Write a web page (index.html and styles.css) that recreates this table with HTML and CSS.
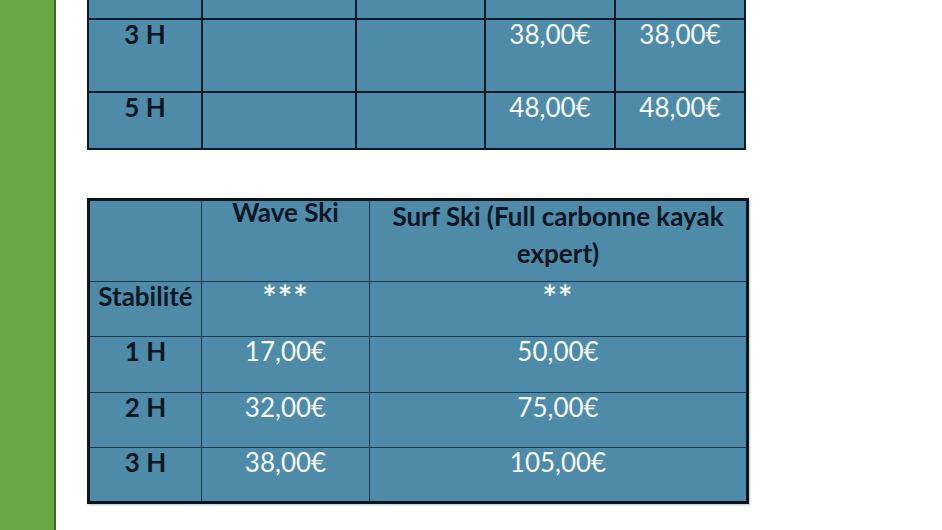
FILE: index.html
```html
<!DOCTYPE html>
<html lang="fr">
<head>
<meta charset="utf-8">
<title>Tarifs</title>
<link rel="stylesheet" href="styles.css">
</head>
<body>
<div class="page">
  <div class="sidebar"></div>
  <main class="content">
    <table class="tarifs tarifs-top">
      <colgroup>
        <col class="c114"><col class="c154"><col class="c129"><col class="c130"><col class="c130">
      </colgroup>
      <tr class="r-cut"><td></td><td></td><td></td><td></td><td></td></tr>
      <tr class="r-73"><th>3 H</th><td></td><td></td><td class="val">38,00€</td><td class="val">38,00€</td></tr>
      <tr class="r-57"><th>5 H</th><td></td><td></td><td class="val">48,00€</td><td class="val">48,00€</td></tr>
    </table>

    <table class="tarifs tarifs-bottom">
      <colgroup>
        <col class="c113"><col class="c168"><col class="c378">
      </colgroup>
      <tr class="r-head"><td></td><th>Wave Ski</th><th class="two-line">Surf Ski (Full carbonne kayak expert)</th></tr>
      <tr class="r-55"><th>Stabilité</th><td class="val stars">***</td><td class="val stars">**</td></tr>
      <tr class="r-56"><th>1 H</th><td class="val">17,00€</td><td class="val">50,00€</td></tr>
      <tr class="r-55"><th>2 H</th><td class="val">32,00€</td><td class="val">75,00€</td></tr>
      <tr class="r-55"><th>3 H</th><td class="val">38,00€</td><td class="val">105,00€</td></tr>
    </table>
  </main>
</div>
</body>
</html>
```

FILE: styles.css
```css
html, body {
  margin: 0;
  padding: 0;
  background: #ffffff;
}

body {
  font-family: Lato, "Open Sans", sans-serif;
  width: 942px;
  height: 530px;
  overflow: hidden;
}

.page {
  display: flex;
  height: 530px;
}

.sidebar {
  width: 54px;
  flex: none;
  background: #6aa744;
  border-right: 2px solid #3f6b2c;
}

.content {
  padding-left: 31px;
  display: flex;
  flex-direction: column;
  align-items: flex-start;
}

.tarifs {
  border-collapse: collapse;
  table-layout: fixed;
  background: #4e8ba8;
  font-size: 26px;
  line-height: 1.15;
  text-align: center;
}

.tarifs th,
.tarifs td {
  padding: 0;
  vertical-align: top;
  text-align: center;
}

.tarifs th {
  font-weight: 700;
  color: #0c1723;
}

.tarifs .val {
  font-weight: 400;
  color: #f5f9fb;
}

/* top table */
.tarifs-top {
  width: 659px;
  margin-top: -42px;
  border: 2px solid #0d1b28;
}

.tarifs-top th,
.tarifs-top td {
  border: 2px solid #0d1b28;
}

.tarifs-top .r-cut { height: 60px; }
.tarifs-top .r-73 { height: 73px; }
.tarifs-top .r-57 { height: 57px; }

.c114 { width: 114px; }
.c154 { width: 154px; }
.c129 { width: 129px; }
.c130 { width: 130px; }

/* bottom table */
.tarifs-bottom {
  width: 660px;
  margin-top: 48px;
  border: 3px solid #0a141d;
  box-shadow: 1px 1px 2px rgba(0, 0, 0, 0.25);
}

.tarifs-bottom th,
.tarifs-bottom td {
  border: 1px solid #1c384b;
}

.tarifs-bottom .r-head { height: 82px; }
.tarifs-bottom .r-55 { height: 55px; }
.tarifs-bottom .r-56 { height: 56px; }

.tarifs-bottom .two-line {
  line-height: 37px;
  padding: 0 6px;
  position: relative;
  top: -3px;
}

.tarifs-bottom .r-head th:not(.two-line) {
  position: relative;
  top: -3px;
}

.tarifs-bottom .stars {
  font-size: 34px;
  font-weight: 700;
  line-height: 30px;
  letter-spacing: 1px;
}

.c113 { width: 113px; }
.c168 { width: 168px; }
.c378 { width: 378px; }
```
